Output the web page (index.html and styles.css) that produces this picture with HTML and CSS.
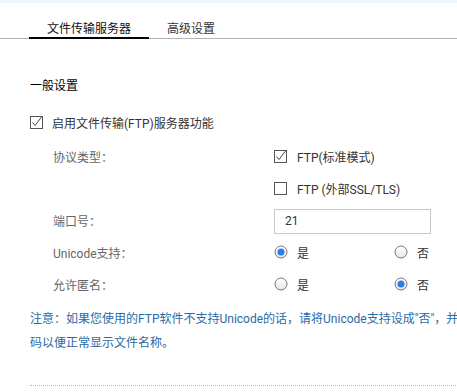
FILE: index.html
```html
<!DOCTYPE html>
<html lang="zh-CN">
<head>
    <meta charset="UTF-8">
    <meta name="viewport" content="width=device-width, initial-scale=1.0">
    <title>文件传输服务器</title>
    <link rel="stylesheet" href="styles.css">
</head>
<body>
    <div class="topbar"></div>

    <!-- Tabs -->
    <div class="tabs">
        <div class="tab active">文件传输服务器</div>
        <div class="tab">高级设置</div>
    </div>

    <div class="content">
        <h3 class="section-title">一般设置</h3>

        <div class="enable-row">
            <svg class="check" width="13" height="13" viewBox="0 0 13 13"><rect x="0.5" y="0.5" width="12" height="12" fill="#fff" stroke="#555"/><polyline points="2.5,6.5 5,9.5 11.5,1" fill="none" stroke="#444" stroke-width="1"/></svg>
            <span>启用文件传输(FTP)服务器功能</span>
        </div>

        <div class="form">
            <div class="label">协议类型：</div>
            <div class="field">
                <svg class="check" width="13" height="13" viewBox="0 0 13 13"><rect x="0.5" y="0.5" width="12" height="12" fill="#fff" stroke="#555"/><polyline points="2.5,6.5 5,9.5 11.5,1" fill="none" stroke="#444" stroke-width="1"/></svg>
                <span>FTP(标准模式)</span>
            </div>

            <div class="label"></div>
            <div class="field">
                <svg class="check" width="13" height="13" viewBox="0 0 13 13"><rect x="0.5" y="0.5" width="12" height="12" fill="#fff" stroke="#555"/></svg>
                <span>FTP (外部SSL/TLS)</span>
            </div>

            <div class="label">端口号：</div>
            <div class="field port">
                <input type="text" class="port-input" value="21">
            </div>

            <div class="label">Unicode支持：</div>
            <div class="field">
                <div class="option">
                    <svg class="radio" width="14" height="14" viewBox="0 0 14 14"><defs><linearGradient id="rg" x1="0" y1="0" x2="0" y2="1"><stop offset="0" stop-color="#fff"/><stop offset="1" stop-color="#e6e6e6"/></linearGradient></defs><circle cx="7" cy="7" r="6" fill="url(#rg)" stroke="#777"/><circle cx="7" cy="7" r="3.5" fill="#2f7be6"/></svg>
                    <span>是</span>
                </div>
                <div class="option">
                    <svg class="radio" width="14" height="14" viewBox="0 0 14 14"><circle cx="7" cy="7" r="6" fill="url(#rg)" stroke="#777"/></svg>
                    <span>否</span>
                </div>
            </div>

            <div class="label">允许匿名：</div>
            <div class="field">
                <div class="option">
                    <svg class="radio" width="14" height="14" viewBox="0 0 14 14"><circle cx="7" cy="7" r="6" fill="url(#rg)" stroke="#777"/></svg>
                    <span>是</span>
                </div>
                <div class="option">
                    <svg class="radio" width="14" height="14" viewBox="0 0 14 14"><circle cx="7" cy="7" r="6" fill="url(#rg)" stroke="#777"/><circle cx="7" cy="7" r="3.5" fill="#2f7be6"/></svg>
                    <span>否</span>
                </div>
            </div>
        </div>

        <p class="note">注意：如果您使用的FTP软件不支持Unicode的话，请将Unicode支持设成"否"，并选择文件名编码以便正常显示文件名称。</p>

        <div class="divider"></div>
    </div>
</body>
</html>
```

FILE: styles.css
```css
body {
    font-family: 'Roboto', 'Noto Sans CJK SC', sans-serif;
    font-size: 12px;
    margin: 0;
    padding: 0;
    background-color: #fff;
    color: #333;
    overflow: hidden;
    width: 640px;
}

.topbar {
    height: 3px;
    background-color: #eef5fd;
}

.tabs {
    display: flex;
    padding-left: 29px;
    border-bottom: 1px solid #b4b4b4;
}

.tab {
    position: relative;
    padding: 18px 18px 1px;
    line-height: 16px;
    color: #333;
}

.tab.active {
    color: #111;
}

.tab.active::after {
    content: "";
    position: absolute;
    left: 0;
    right: 0;
    bottom: -1px;
    height: 2px;
    background-color: #000;
}

.content {
    padding: 39px 0 0 30px;
}

.section-title {
    margin: 0;
    font-size: 12px;
    font-weight: normal;
    line-height: 16px;
    color: #000;
}

.enable-row {
    display: flex;
    align-items: center;
    gap: 9px;
    height: 32px;
    margin-top: 12px;
}

.form {
    display: grid;
    grid-template-columns: 244px 1fr;
    grid-auto-rows: 32px;
    margin-top: 2px;
}

.label {
    display: flex;
    align-items: center;
    padding-left: 23px;
    color: #666;
}

.field {
    display: flex;
    align-items: center;
    gap: 10px;
}

.field.port {
    height: 34px;
}

.port-input {
    box-sizing: border-box;
    width: 157px;
    height: 25px;
    padding: 0 10px;
    border: 1px solid #c8c8c8;
    border-radius: 0;
    font-family: inherit;
    font-size: 12px;
    color: #333;
    outline: none;
}

.option {
    display: flex;
    align-items: center;
    gap: 9px;
    width: 110px;
}

.check,
.radio {
    flex-shrink: 0;
}

.note {
    width: 505px;
    margin: 7px 0 0;
    line-height: 24px;
    color: #2a6aa5;
}

.divider {
    margin-top: 30px;
    border-top: 1px dotted #bbb;
}
```
